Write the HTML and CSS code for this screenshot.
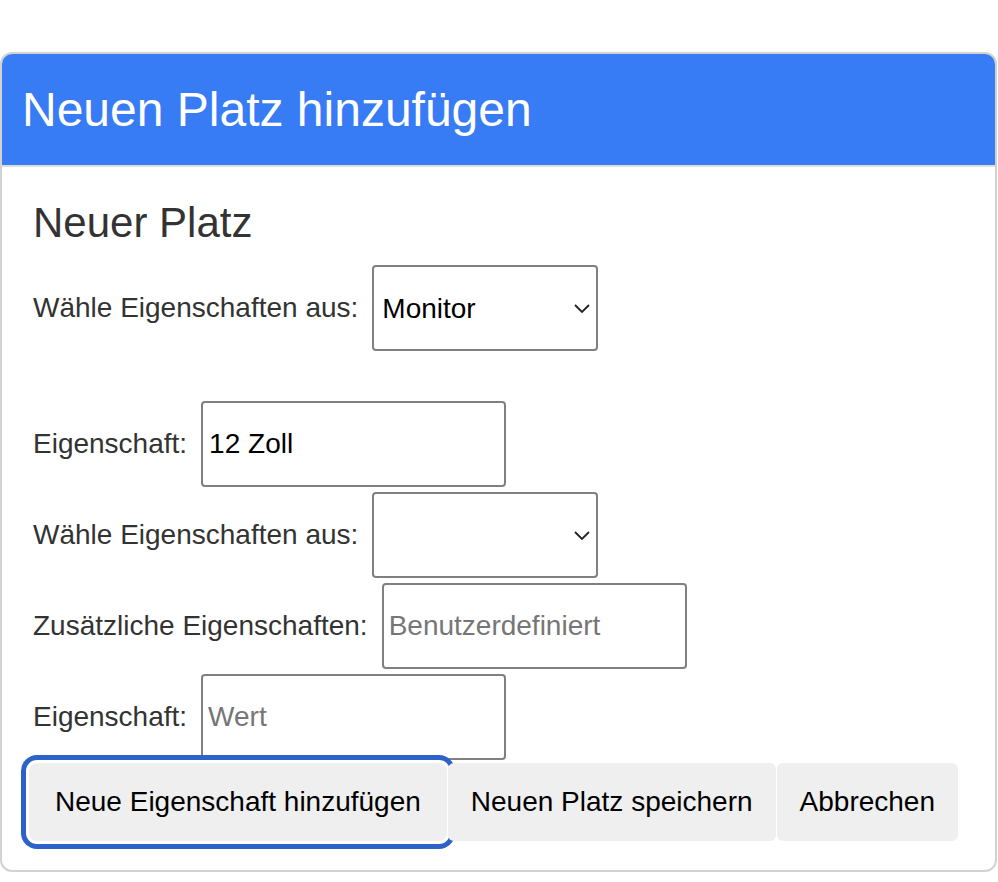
FILE: index.html
```html
<!DOCTYPE html>
<html lang="de">
<head>
<meta charset="utf-8">
<title>Neuen Platz hinzufügen</title>
<link rel="stylesheet" href="styles.css">
</head>
<body>
<div class="modal">
  <header class="modal-header">
    <h1 class="modal-title">Neuen Platz hinzufügen</h1>
  </header>
  <div class="modal-body">
    <h2 class="section-title">Neuer Platz</h2>
    <div class="field field-main">
      <label class="field-label">Wähle Eigenschaften aus:</label>
      <span class="select-wrap">
        <select class="select"><option>Monitor</option></select>
        <svg class="chevron" width="16" height="9" viewBox="0 0 16 9"><path d="M1 1 L8 8 L15 1" fill="none" stroke="#222" stroke-width="1.8"/></svg>
      </span>
    </div>
    <div class="props">
      <div class="field">
        <label class="field-label">Eigenschaft:</label>
        <input class="input" type="text" value="12 Zoll">
      </div>
      <div class="field">
        <label class="field-label">Wähle Eigenschaften aus:</label>
        <span class="select-wrap">
          <select class="select"><option></option></select>
          <svg class="chevron" width="16" height="9" viewBox="0 0 16 9"><path d="M1 1 L8 8 L15 1" fill="none" stroke="#222" stroke-width="1.8"/></svg>
        </span>
      </div>
      <div class="field">
        <label class="field-label">Zusätzliche Eigenschaften:</label>
        <input class="input input-custom" type="text" placeholder="Benutzerdefiniert">
      </div>
      <div class="field">
        <label class="field-label">Eigenschaft:</label>
        <input class="input input-custom" type="text" placeholder="Wert">
      </div>
    </div>
    <div class="actions">
      <button class="btn btn-wide is-focused" type="button">Neue Eigenschaft hinzufügen</button>
      <button class="btn" type="button">Neuen Platz speichern</button>
      <button class="btn" type="button">Abbrechen</button>
    </div>
  </div>
</div>
</body>
</html>
```
FILE: styles.css
```css
html, body {
  margin: 0;
  padding: 0;
  background: #ffffff;
}

body {
  font-family: "Liberation Sans", Arial, sans-serif;
  color: #333333;
}

.modal {
  margin: 52px 1px 0 0;
  border: 2px solid #d2d2d2;
  border-radius: 12px;
  overflow: hidden;
  background: #ffffff;
}

.modal-header {
  background: #377bf5;
  padding: 28px 20px;
  border-bottom: 2px solid #dddddd;
}

.modal-title {
  margin: 0;
  font-size: 48px;
  font-weight: normal;
  line-height: 55px;
  color: #ffffff;
}

.modal-body {
  padding: 32px 30px 29px 31px;
}

.section-title {
  margin: 0 0 18px 0;
  font-size: 42px;
  font-weight: normal;
  line-height: 48px;
  color: #333333;
}

.field {
  display: flex;
  align-items: center;
  gap: 14px;
}

.field-main {
  margin-bottom: 50px;
}

.props {
  display: flex;
  flex-direction: column;
  gap: 5px;
}

.field-label {
  font-size: 28px;
  color: #333333;
  white-space: nowrap;
}

.select-wrap {
  position: relative;
  display: inline-block;
}

.select {
  appearance: none;
  -webkit-appearance: none;
  box-sizing: border-box;
  width: 226px;
  height: 86px;
  margin: 0;
  padding: 0 30px 0 8px;
  border: 2px solid #808080;
  border-radius: 4px;
  background: #ffffff;
  font-family: "Liberation Sans", Arial, sans-serif;
  font-size: 28px;
  color: #000000;
}

.chevron {
  position: absolute;
  right: 8px;
  top: 39px;
  pointer-events: none;
}

.input {
  box-sizing: border-box;
  width: 305px;
  height: 86px;
  margin: 0;
  padding: 0 6px;
  border: 2px solid #808080;
  border-radius: 4px;
  background: #ffffff;
  font-family: "Liberation Sans", Arial, sans-serif;
  font-size: 28px;
  color: #000000;
}

.input-custom {
  padding-left: 5px;
}

.input::placeholder {
  color: #767676;
}

.actions {
  display: flex;
  gap: 1px;
  margin: 3px 0 0 -4px;
}

.btn {
  height: 78px;
  padding: 0 23px;
  border: none;
  border-radius: 6px;
  background: #efefef;
  font-family: "Liberation Sans", Arial, sans-serif;
  font-size: 28px;
  color: #000000;
}

.btn-wide {
  padding: 0 26px;
  border-radius: 8px;
}

.is-focused {
  outline: none;
  box-shadow: 0 0 0 3px #ffffff, 0 0 0 8px #2d63c8;
}
```
